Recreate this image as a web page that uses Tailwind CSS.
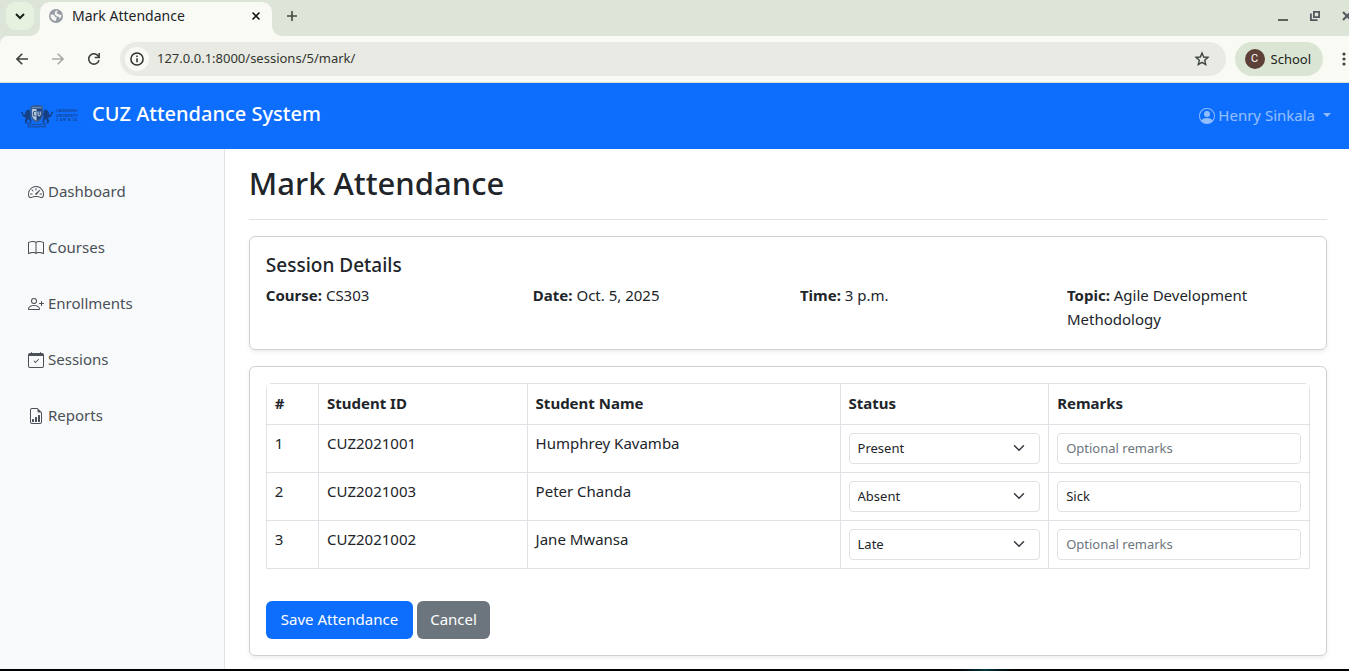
<!DOCTYPE html>
<html lang="en">
<head>
<meta charset="utf-8">
<meta name="viewport" content="width=device-width, initial-scale=1">
<title>Mark Attendance</title>
<script src="https://cdn.jsdelivr.net/npm/@tailwindcss/browser@4"></script>
</head>
<body class="flex min-h-screen flex-col overflow-x-hidden bg-white font-['Noto_Sans',sans-serif] text-[15px] leading-6 text-[#212529]">

<!-- Browser window: tab strip -->
<div class="bg-[#dde4d8]">
  <div class="flex h-9 items-start pt-[2px] pl-[6px]">
    <button type="button" aria-label="Search tabs" class="flex size-7 items-center justify-center rounded-[9px] bg-[#e6f1df]">
      <svg class="size-[10px]" viewBox="0 0 10 10" fill="none" stroke="#1b1f1a" stroke-width="2"><path d="M1 3l4 4 4-4"/></svg>
    </button>
    <div class="relative ml-[6px] flex h-[34px] w-[232px] items-center rounded-t-[10px] bg-[#fafaf5] pr-[11px] pb-[6px] pl-[9px]">
      <svg class="absolute bottom-0 -left-[10px] size-[10px]" viewBox="0 0 10 10" fill="#fafaf5"><path d="M10 0v10H0A10 10 0 0 0 10 0z"/></svg>
      <svg class="absolute -right-[10px] bottom-0 size-[10px]" viewBox="0 0 10 10" fill="#fafaf5"><path d="M0 0v10h10A10 10 0 0 1 0 0z"/></svg>
      <svg class="size-[14px]" viewBox="0 0 14 14"><circle cx="7" cy="7" r="7" fill="#959ba3"/><path d="M1.600 5.600c1.400 0 2.800 0 3.700.6.700.5.400 1.500 1.200 1.700 1.100.2 1.300.6 1.100 1.400L6.900 12C3.500 12 1 9.200 1.600 5.600zM7.200 1.600l1.800.4c-.2.800-.9.900-1.300 1.400-.4.600.4.900 1 1.300.700.4 1 .9 1.800 1l2 .1c0 1.700-.6 3-1.700 4.200-.5-.6-.1-1.500-.8-2-.9-.6-2.200 0-2.700-1-.2-.6-.5-.8-1.100-1-.7-.2-.5-1-.4-1.600.1-.9 0-1.900 1.400-2.800z" fill="#f4f5f2"/></svg>
      <span class="ml-[9px] flex-1 text-sm leading-5">Mark Attendance</span>
      <button type="button" aria-label="Close tab" class="flex size-[10px] items-center justify-center">
        <svg class="size-[10px]" viewBox="0 0 10 10" stroke="#1b1f1a" stroke-width="1.700"><path d="M1.500 1.500l7 7M8.500 1.500l-7 7"/></svg>
      </button>
    </div>
    <button type="button" aria-label="New tab" class="mt-[9px] ml-[15px]">
      <svg class="size-[10px]" viewBox="0 0 10 10" stroke="#434841" stroke-width="1.600"><path d="M5 0v10M0 5h10"/></svg>
    </button>
    <div class="-mr-[3px] ml-auto flex gap-[22px] pt-[9px]">
      <button type="button" aria-label="Minimize"><svg class="size-[10px]" viewBox="0 0 10 10"><path d="M0 8h10v2H0z" fill="#5d625b"/></svg></button>
      <button type="button" aria-label="Restore"><svg class="size-[10px]" viewBox="0 0 10 10" fill="none" stroke="#53585f" stroke-width="1.800"><path d="M3.900.9h5.200v5.200H3.900zM.9 2.500v6.600h6.600"/></svg></button>
      <button type="button" aria-label="Close window"><svg class="size-[10px]" viewBox="0 0 10 10" stroke="#53585f" stroke-width="2"><path d="M1 1l8 8M9 1L1 9"/></svg></button>
    </div>
  </div>

  <!-- Browser window: toolbar -->
  <div class="flex h-[47px] items-center rounded-tl-lg border-b border-[#dcdfd7] bg-[#fafaf5] pl-4 text-[#3d443b]">
    <button type="button" aria-label="Back"><svg class="size-3" viewBox="0 0 12 12" fill="none" stroke="currentColor" stroke-width="1.600"><path d="M12 6H1M6.300.7L1 6l5.300 5.300"/></svg></button>
    <button type="button" aria-label="Forward" class="ml-6 text-[#a9aca6]"><svg class="size-3" viewBox="0 0 12 12" fill="none" stroke="currentColor" stroke-width="1.600"><path d="M0 6h11M5.700.7L11 6l-5.300 5.300"/></svg></button>
    <button type="button" aria-label="Reload" class="ml-6"><svg class="size-3" viewBox="0 0 12 12" fill="none" stroke="currentColor" stroke-width="1.600"><path d="M11 7.100A5.200 5.200 0 1 1 10 2.700l1 1.300M11.200 0v4.500H6.700"/></svg></button>
    <div class="ml-5 flex h-[34px] flex-1 items-center rounded-full bg-[#e9eae4] pr-4 pl-[5px]">
      <button type="button" aria-label="Site information" class="flex size-6 items-center justify-center rounded-full bg-[#fafaf5]">
        <svg class="size-[14px]" viewBox="0 0 14 14" fill="none" stroke="#2b302a" stroke-width="1.500"><circle cx="7" cy="7" r="6.100"/><path d="M7 6.300v4M7 3.600v1.500"/></svg>
      </button>
      <label for="address" class="sr-only">Address</label>
      <input id="address" type="text" value="127.0.0.1:8000/sessions/5/mark/" class="ml-2 h-7 min-w-0 flex-1 bg-transparent pb-[2px] text-[13px] leading-6 text-[#32362f] outline-none">
      <button type="button" aria-label="Bookmark this page"><svg class="size-4" viewBox="0 0 16 16" fill="none" stroke="#3d443b" stroke-width="1.400"><path d="M8 2l1.700 4 4.300.4-3.300 2.900 1 4.300L8 11.400l-3.700 2.200 1-4.300L2 6.400 6.300 6z"/></svg></button>
    </div>
    <button type="button" class="ml-[9px] flex h-[34px] items-center gap-[6px] rounded-full bg-[#dae6d3] pr-3 pl-[10px] text-[13px] text-[#1c241a]">
      <span class="flex size-5 items-center justify-center rounded-full bg-[#5d4037] font-['Roboto',sans-serif] text-[11px] text-white">C</span>School
    </button>
    <button type="button" aria-label="Browser menu" class="mr-[3px] ml-[19px]"><svg class="h-[14px] w-1" viewBox="0 0 4 14" fill="#3d443b"><circle cx="2" cy="2" r="1.600"/><circle cx="2" cy="7" r="1.600"/><circle cx="2" cy="12" r="1.600"/></svg></button>
  </div>
</div>

<!-- Site header -->
<header class="flex h-[66px] items-center justify-between bg-[#0d6efd] pr-[18px] pl-5">
  <a href="#" class="flex items-center gap-[14px] text-[20px] leading-[30px] font-medium text-white">
    <svg class="h-6 w-[58px]" viewBox="0 0 58 24" aria-label="Cavendish University Zambia">
      <g fill="#173f85">
        <path d="M2 10q-2-2 .3-2.500 1.300.5.600 2.200l1.500 1.600 1-3.300 1.500-2.100 2-.5 1.700 1.300-.7 1.500 1.300 1.500 1.300-1.300.5 1.200-2.300 1.700-.3 2.500 1.100 2.800-.4 2.500H9.500l.5-2-1.500-2.200-1.500 1.800.3 2.600H5.200l-.3-3L6 13.700l-3.200-1.500z"/>
        <path d="M32 10q2-2-.3-2.500-1.300.5-.6 2.200l-1.500 1.600-1-3.300-1.500-2.100-2-.5-1.700 1.300.7 1.500-1.300 1.500-1.300-1.300-.5 1.200 2.300 1.700.3 2.500-1.100 2.800.4 2.500h1.600l-.5-2 1.500-2.200 1.500 1.800-.3 2.600h2.100l.3-3-1.100-2.300 3.200-1.500z"/>
      </g>
      <path d="M10.500 2.300Q16.500-.5 23 2.300v8.500c0 3.600-3 6.300-6.300 8-3.300-1.700-6.200-4.400-6.200-8z" fill="#345c94"/>
      <path d="M12 5h4.700v11.700C14 15.500 12 13.500 12 10.500z" fill="#b4c6d9"/>
      <path d="M16.700 5h4.800v5.500c0 3-2 5-4.800 6.200z" fill="#1e4483"/>
      <path d="M12 3.600h9.500" stroke="#8fa8c5" stroke-width=".7"/>
      <path d="M15.700 7.500h-1.200q-1.100 0-1.100 1.200v2q0 1.200 1.100 1.200h1.200" fill="none" stroke="#1b3f7d" stroke-width="1"/>
      <path d="M18 7.500v3.300q0 1.100 1.100 1.100t1.100-1.100V7.500" fill="none" stroke="#d3dde6" stroke-width="1"/>
      <path d="M7.500 19.500l4 .7q5.200 1.500 10.400 0l4-.7-1.400 1.800 1 1.700-4.300-.4q-4.500 1.200-9 0l-4.300.4 1-1.700z" fill="none" stroke="#1b478f" stroke-width="1"/>
      <g fill="#164596" font-family="Liberation Sans, sans-serif" font-weight="700">
        <text x="36" y="8" font-size="3.700">CAVENDISH</text><text x="36" y="12.500" font-size="3.700">UNIVERSITY</text><text x="36" y="17" font-size="3.500">Z&#160; A M&#160; B&#160; I A</text>
      </g>
    </svg>
    <span class="pb-1">CUZ Attendance System</span>
  </a>
  <button type="button" class="flex items-center pb-[2px] text-white/55">
    <svg class="mt-[2px] mr-[3px] size-4" viewBox="0 0 16 16" fill="currentColor"><path d="M11 6a3 3 0 1 1-6 0 3 3 0 0 1 6 0"/><path fill-rule="evenodd" d="M0 8a8 8 0 1 1 16 0A8 8 0 0 1 0 8m8-7a7 7 0 0 0-5.468 11.370C3.242 11.226 4.805 10 8 10s4.757 1.225 5.468 2.370A7 7 0 0 0 8 1"/></svg>
    Henry Sinkala
    <svg class="ml-2 h-1 w-2" viewBox="0 0 8 4" fill="currentColor"><path d="M0 0h8L4 4z"/></svg>
  </button>
</header>

<div class="flex flex-1">
  <nav aria-label="Main" class="w-1/6 shrink-0 border-r border-[#dee2e6] bg-[#f8f9fa] pt-[14px] text-[#495057] [&_svg]:mt-[2px]">
    <a href="#" class="flex items-center gap-1 py-4 pl-7">
      <svg class="size-4" viewBox="0 0 16 16" fill="currentColor"><path d="M8 4a.5.5 0 0 1 .5.5V6a.5.5 0 0 1-1 0V4.500A.5.5 0 0 1 8 4M3.732 5.732a.5.5 0 0 1 .707 0l.915.914a.5.5 0 1 1-.708.708l-.914-.915a.5.5 0 0 1 0-.707M2 10a.5.5 0 0 1 .5-.5h1.586a.5.5 0 0 1 0 1H2.500A.5.5 0 0 1 2 10m9.500 0a.5.5 0 0 1 .5-.5h1.500a.5.5 0 0 1 0 1H12a.5.5 0 0 1-.5-.5m.754-4.246a.39.39 0 0 0-.527-.02L7.547 9.310a.91.91 0 1 0 1.302 1.258l3.434-4.297a.39.39 0 0 0-.029-.518z"/><path fill-rule="evenodd" d="M0 10a8 8 0 1 1 15.547 2.661c-.442 1.253-1.845 1.602-2.932 1.250C11.309 13.488 9.475 13 8 13c-1.474 0-3.310.488-4.615.911-1.087.352-2.490.003-2.932-1.250A8 8 0 0 1 0 10m8-7a7 7 0 0 0-6.603 9.329c.203.575.923.876 1.680.63C4.397 12.533 6.358 12 8 12s3.604.532 4.923.96c.757.245 1.477-.056 1.680-.631A7 7 0 0 0 8 3"/></svg>Dashboard</a>
    <a href="#" class="flex items-center gap-1 py-4 pl-7">
      <svg class="size-4" viewBox="0 0 16 16" fill="currentColor"><path d="M1 2.828c.885-.37 2.154-.769 3.388-.893 1.330-.134 2.458.063 3.112.752v9.746c-.935-.53-2.120-.603-3.213-.493-1.180.12-2.370.461-3.287.811zm7.500-.141c.654-.689 1.782-.886 3.112-.752 1.234.124 2.503.523 3.388.893v9.923c-.918-.35-2.107-.692-3.287-.81-1.094-.111-2.278-.039-3.213.492zM8 1.783C7.015.936 5.587.81 4.287.94c-1.514.153-3.042.672-3.994 1.105A.5.5 0 0 0 0 2.500v11a.5.5 0 0 0 .707.455c.882-.4 2.303-.881 3.680-1.020 1.409-.142 2.590.087 3.223.877a.5.5 0 0 0 .78 0c.633-.79 1.814-1.019 3.222-.877 1.378.139 2.800.62 3.681 1.020A.5.5 0 0 0 16 13.500v-11a.5.5 0 0 0-.293-.455c-.952-.433-2.480-.952-3.994-1.105C10.413.809 8.985.936 8 1.783"/></svg>Courses</a>
    <a href="#" class="flex items-center gap-1 py-4 pl-7">
      <svg class="size-4" viewBox="0 0 16 16" fill="currentColor"><path d="M6 8a3 3 0 1 0 0-6 3 3 0 0 0 0 6m2-3a2 2 0 1 1-4 0 2 2 0 0 1 4 0m4 8c0 1-1 1-1 1H1s-1 0-1-1 1-4 6-4 6 3 6 4m-1-.004c-.001-.246-.154-.986-.832-1.664C9.516 10.680 8.289 10 6 10s-3.516.68-4.168 1.332c-.678.678-.83 1.418-.832 1.664z"/><path fill-rule="evenodd" d="M13.500 5a.5.5 0 0 1 .5.5V7h1.500a.5.5 0 0 1 0 1H14v1.500a.5.5 0 0 1-1 0V8h-1.500a.5.5 0 0 1 0-1H13V5.500a.5.5 0 0 1 .5-.5"/></svg>Enrollments</a>
    <a href="#" class="flex items-center gap-1 py-4 pl-7">
      <svg class="size-4" viewBox="0 0 16 16" fill="currentColor"><path d="M10.854 7.146a.5.5 0 0 1 0 .708l-3 3a.5.5 0 0 1-.708 0l-1.500-1.500a.5.5 0 1 1 .708-.708L7.500 9.793l2.646-2.647a.5.5 0 0 1 .708 0"/><path d="M3.500 0a.5.5 0 0 1 .5.5V1h8V.5a.5.5 0 0 1 1 0V1h1a2 2 0 0 1 2 2v11a2 2 0 0 1-2 2H2a2 2 0 0 1-2-2V3a2 2 0 0 1 2-2h1V.5a.5.5 0 0 1 .5-.5M1 4v10a1 1 0 0 0 1 1h12a1 1 0 0 0 1-1V4z"/></svg>Sessions</a>
    <a href="#" class="flex items-center gap-1 py-4 pl-7">
      <svg class="size-4" viewBox="0 0 16 16" fill="currentColor"><path d="M10 13.500a.5.5 0 0 0 .5.5h1a.5.5 0 0 0 .5-.5v-6a.5.5 0 0 0-.5-.5h-1a.5.5 0 0 0-.5.5zm-2.500.5a.5.5 0 0 1-.5-.5v-4a.5.5 0 0 1 .5-.5h1a.5.5 0 0 1 .5.5v4a.5.5 0 0 1-.5.5zm-3 0a.5.5 0 0 1-.5-.5v-2a.5.5 0 0 1 .5-.5h1a.5.5 0 0 1 .5.5v2a.5.5 0 0 1-.5.5z"/><path d="M14 14V4.500L9.500 0H4a2 2 0 0 0-2 2v12a2 2 0 0 0 2 2h8a2 2 0 0 0 2-2M9.500 3A1.500 1.500 0 0 0 11 4.500h2V14a1 1 0 0 1-1 1H4a1 1 0 0 1-1-1V2a1 1 0 0 1 1-1h5.500z"/></svg>Reports</a>
  </nav>

  <main class="min-w-0 flex-1 pt-4 pr-[22px] pb-[13px] pl-6">
    <h1 class="mb-4 border-b border-[#dee2e6] pb-[18px] text-[31px] leading-9 font-medium">Mark Attendance</h1>

    <section class="mb-4 rounded-md border border-[#cfd0d1] p-4 shadow-[0_2px_4px_rgba(0,0,0,0.075)]">
      <h2 class="mb-[6px] text-[19px] leading-6 font-medium">Session Details</h2>
      <div class="grid grid-cols-4 gap-6 pb-[2px]">
        <p><strong>Course:</strong> CS303</p>
        <p><strong>Date:</strong> Oct. 5, 2025</p>
        <p><strong>Time:</strong> 3 p.m.</p>
        <p><strong>Topic:</strong> Agile Development Methodology</p>
      </div>
    </section>

    <form class="rounded-md border border-[#cfd0d1] p-4 shadow-[0_2px_4px_rgba(0,0,0,0.075)]">
      <div class="mb-8 overflow-hidden rounded-t-md">
        <table class="w-full table-fixed border-collapse text-left align-top [&_td]:border [&_td]:border-[#dee2e6] [&_td]:px-2 [&_td]:pt-[6px] [&_td]:pb-2 [&_td]:align-top [&_th]:border [&_th]:border-[#dee2e6] [&_th]:px-2 [&_th]:pt-[7px] [&_th]:pb-[9px]">
          <thead>
            <tr><th class="w-[5%]">#</th><th class="w-[20%]">Student ID</th><th class="w-[30%]">Student Name</th><th class="w-[20%]">Status</th><th class="w-[25%]">Remarks</th></tr>
          </thead>
          <tbody>
            <tr>
              <td>1</td><td>CUZ2021001</td><td>Humphrey Kavamba</td>
              <td><div class="relative mt-[2px]">
                <select aria-label="Status of Humphrey Kavamba" class="block h-[31px] w-full appearance-none rounded border border-[#dee2e6] bg-white px-2 pb-[2px] text-[13px]"><option selected>Present</option><option>Absent</option><option>Late</option></select>
                <svg class="pointer-events-none absolute top-[9px] right-[15px] h-3 w-3" viewBox="0 0 16 16" fill="none" stroke="#343a40" stroke-width="2" stroke-linecap="round" stroke-linejoin="round"><path d="m2 5 6 6 6-6"/></svg>
              </div></td>
              <td><input aria-label="Remarks for Humphrey Kavamba" type="text" placeholder="Optional remarks" class="mt-[2px] block h-[31px] w-full rounded border border-[#dee2e6] px-2 pb-[2px] text-[13px] placeholder:text-[#6c757d]"></td>
            </tr>
            <tr>
              <td>2</td><td>CUZ2021003</td><td>Peter Chanda</td>
              <td><div class="relative mt-[2px]">
                <select aria-label="Status of Peter Chanda" class="block h-[31px] w-full appearance-none rounded border border-[#dee2e6] bg-white px-2 pb-[2px] text-[13px]"><option>Present</option><option selected>Absent</option><option>Late</option></select>
                <svg class="pointer-events-none absolute top-[9px] right-[15px] h-3 w-3" viewBox="0 0 16 16" fill="none" stroke="#343a40" stroke-width="2" stroke-linecap="round" stroke-linejoin="round"><path d="m2 5 6 6 6-6"/></svg>
              </div></td>
              <td><input aria-label="Remarks for Peter Chanda" type="text" value="Sick" placeholder="Optional remarks" class="mt-[2px] block h-[31px] w-full rounded border border-[#dee2e6] px-2 pb-[2px] text-[13px] placeholder:text-[#6c757d]"></td>
            </tr>
            <tr>
              <td>3</td><td>CUZ2021002</td><td>Jane Mwansa</td>
              <td><div class="relative mt-[2px]">
                <select aria-label="Status of Jane Mwansa" class="block h-[31px] w-full appearance-none rounded border border-[#dee2e6] bg-white px-2 pb-[2px] text-[13px]"><option>Present</option><option>Absent</option><option selected>Late</option></select>
                <svg class="pointer-events-none absolute top-[9px] right-[15px] h-3 w-3" viewBox="0 0 16 16" fill="none" stroke="#343a40" stroke-width="2" stroke-linecap="round" stroke-linejoin="round"><path d="m2 5 6 6 6-6"/></svg>
              </div></td>
              <td><input aria-label="Remarks for Jane Mwansa" type="text" placeholder="Optional remarks" class="mt-[2px] block h-[31px] w-full rounded border border-[#dee2e6] px-2 pb-[2px] text-[13px] placeholder:text-[#6c757d]"></td>
            </tr>
          </tbody>
        </table>
      </div>
      <div class="flex gap-1">
        <button type="submit" class="h-[38px] rounded-md bg-[#0d6efd] px-[15px] pb-[2px] text-white">Save Attendance</button>
        <a href="#" class="flex h-[38px] items-center rounded-md bg-[#6c757d] px-[13px] pb-[2px] text-white">Cancel</a>
      </div>
    </form>
  </main>
</div>

<!-- Desktop edge under the window -->
<div class="h-[2px] bg-linear-to-r from-black from-70% via-[#003540] via-73% to-black to-76%"></div>
</body>
</html>
